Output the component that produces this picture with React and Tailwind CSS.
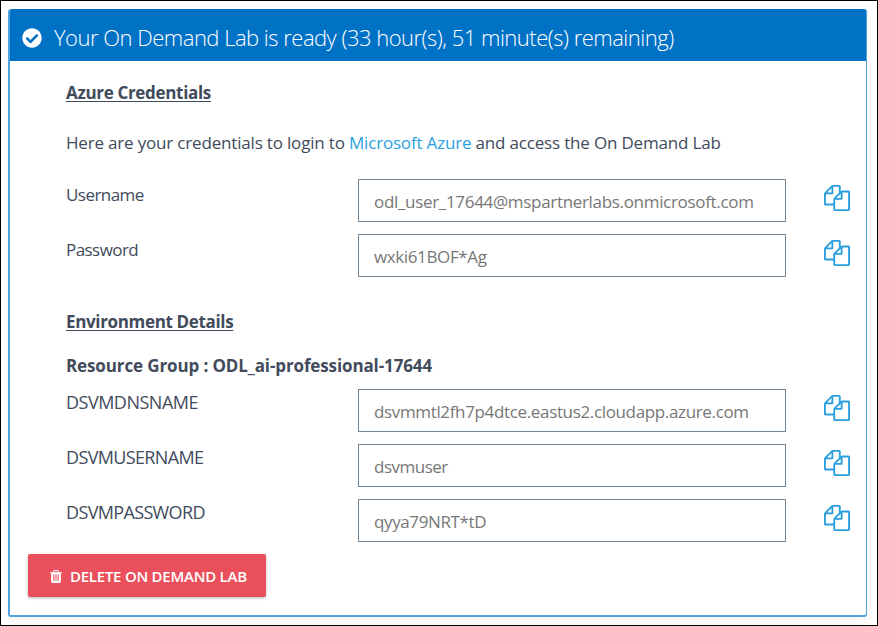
import { FaCheckCircle } from "react-icons/fa";

function CopyIcon() {
  return (
    <svg viewBox="0 0 1792 1792" className="size-[26px] fill-[#2b9fdd]">
      <path d="M1696 384q40 0 68 28t28 68v1216q0 40-28 68t-68 28h-960q-40 0-68-28t-28-68v-288h-544q-40 0-68-28t-28-68v-672q0-40 20-88t48-76l408-408q28-28 76-48t88-20h416q40 0 68 28t28 68v328q68-40 128-40h416zm-544 213l-299 299h299v-299zm-640-384l-299 299h299v-299zm196 647l316-316v-416h-384v416q0 40-28 68t-68 28h-416v640h512v-256q0-40 20-88t48-76zm956 804v-1152h-384v416q0 40-28 68t-68 28h-416v640h896z" />
    </svg>
  );
}

function TrashIcon() {
  return (
    <svg viewBox="0 0 1408 1536" className="h-[13px] w-3 fill-white">
      <path fillRule="evenodd" d="M512 1248V544q0-32-32-32h-64q-32 0-32 32v704q0 32 32 32h64q32 0 32-32zm256 0V544q0-32-32-32h-64q-32 0-32 32v704q0 32 32 32h64q32 0 32-32zm256 0V544q0-32-32-32h-64q-32 0-32 32v704q0 32 32 32h64q32 0 32-32zM480 256h448l-48-117q-7-9-17-11H546q-10 2-17 11zm928 32v64q0 32-32 32h-96v948q0 83-47 143t-113 61H288q-66 0-113-59t-47-141V384H32q-32 0-32-32v-64q0-32 32-32h309l70-167q15-37 54-63t79-26h320q40 0 79 26t54 63l70 167h309q32 0 32 32z" />
    </svg>
  );
}

function Field({ label, value, labelClass, valueClass }) {
  return (
    <div className="flex h-[55px] items-start">
      <div className={`w-[292px] leading-6 ${labelClass}`}>{label}</div>
      <div className="flex h-[43px] w-[428px] items-center border border-[#748594] pt-[2px] pl-[15px] text-[#777777]">
        <span className={valueClass}>{value}</span>
      </div>
      <div className="pt-[6px] pl-[38px]">
        <CopyIcon />
      </div>
    </div>
  );
}

export default function App() {
  return (
    <div className="h-[626px] w-[878px] border border-black bg-white pt-2 pl-[7px] font-['Open_Sans','Noto_Sans',sans-serif] text-[17px] whitespace-nowrap text-[#414b5c]">
      <div className="h-[608px] w-[859px] rounded-[3px] border-r border-b-2 border-l-2 border-[#4fa3df] shadow-[0_3px_8px_rgba(0,0,0,0.06)]">
        <header className="flex h-[52px] items-center rounded-t-[2px] bg-[#0072c6] pt-[5px] pl-3 text-white">
          <FaCheckCircle className="size-5" />
          <h1 className="ml-3 text-[22px] font-light tracking-[-0.51px]">
            Your On Demand Lab is ready (33 hour(s), 51 minute(s) remaining)
          </h1>
        </header>
        <div className="pl-14">
          <h2 className="pt-5 leading-6 font-bold tracking-[-0.32px] underline decoration-1 underline-offset-2">
            Azure Credentials
          </h2>
          <p className="mt-[26px] mb-6 leading-6 tracking-[-0.18px]">
            Here are your credentials to login to <a className="text-[#2b9fdd]">Microsoft Azure</a> and access the On Demand Lab
          </p>
          <Field label="Username" value="odl_user_17644@mspartnerlabs.onmicrosoft.com" labelClass="pt-1 tracking-[-0.55px]" valueClass="tracking-[-0.32px]" />
          <Field label="Password" value="wxki61BOF*Ag" labelClass="pt-1 tracking-[-0.55px]" valueClass="tracking-[-0.38px]" />
          <h2 className="mt-[21px] leading-6 font-bold tracking-[-0.34px] underline decoration-1 underline-offset-2">
            Environment Details
          </h2>
          <h3 className="mt-5 mb-[11px] leading-6 font-bold tracking-[-0.12px]">
            Resource Group : ODL_ai-professional-17644
          </h3>
          <Field label="DSVMDNSNAME" value="dsvmmtl2fh7p4dtce.eastus2.cloudapp.azure.com" labelClass="pt-px text-[18px] tracking-[-0.5px]" valueClass="tracking-[-0.35px]" />
          <Field label="DSVMUSERNAME" value="dsvmuser" labelClass="pt-px text-[18px] tracking-[-0.65px]" valueClass="tracking-[-0.5px]" />
          <Field label="DSVMPASSWORD" value="qyya79NRT*tD" labelClass="pt-px text-[18px] tracking-[-0.65px]" valueClass="tracking-[-0.38px]" />
        </div>
        <button className="ml-[18px] flex h-[43px] w-[238px] items-center rounded-[2px] bg-[#e9505c] pt-[2px] pl-[22px] text-[15px] font-semibold tracking-[-0.25px] text-white shadow-[0_1px_3px_rgba(0,0,0,0.3)]">
          <TrashIcon />
          <span className="ml-2">DELETE ON DEMAND LAB</span>
        </button>
      </div>
    </div>
  );
}
